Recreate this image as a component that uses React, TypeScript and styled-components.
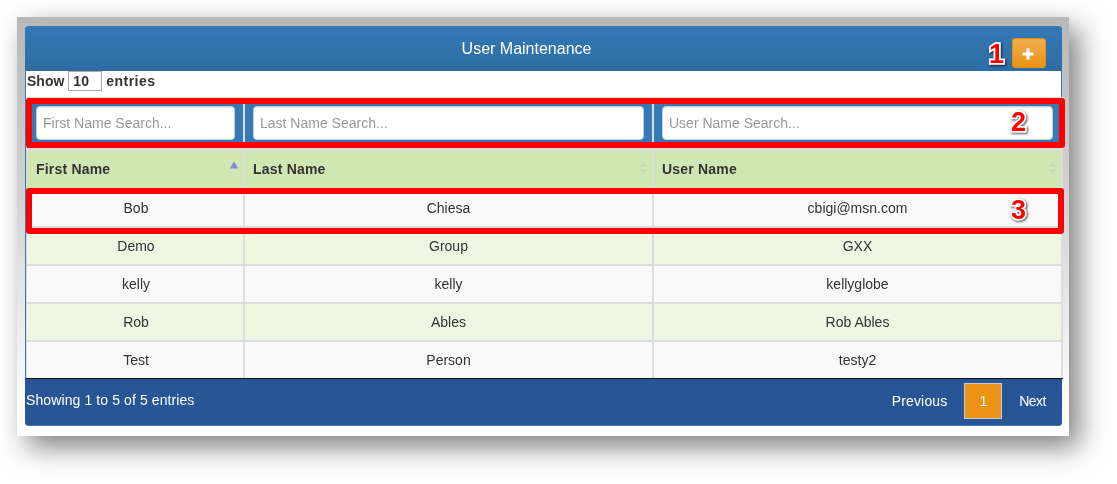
import React from "react";
import styled, { createGlobalStyle } from "styled-components";

const Global = createGlobalStyle`
  html, body { margin: 0; padding: 0; background: #fff; }
  body { font-family: "Liberation Sans", Arial, sans-serif; color: #333; font-size: 14px; }
  * { box-sizing: border-box; }
`;

const Page = styled.div`
  width: 1117px;
  height: 484px;
  padding: 17px 0 0 17px;
  overflow: hidden;
`;

const Frame = styled.div`
  position: relative;
  width: 1052px;
  height: 419px;
  padding: 9px 7px 10px 8px;
  background: linear-gradient(#b8b8b8 0%, #d4d4d4 45%, #fff 95%);
  filter: drop-shadow(10px 11px 14px rgba(0, 0, 0, 0.5));
`;

const Panel = styled.div`
  width: 1037px;
  height: 400px;
  display: flex;
  flex-direction: column;
  border-radius: 4px;
  background: #fff;
  border-left: 1px solid #337ab7;
  border-right: 1px solid #337ab7;
`;

const Header = styled.div`
  height: 45px;
  margin: 0 -1px;
  flex: none;
  display: flex;
  align-items: center;
  justify-content: space-between;
  color: #fff;
  font-size: 16px;
  padding: 0 16px;
  border-radius: 4px 4px 0 0;
  background: linear-gradient(#337ab7, #2d6ca2);
`;

const Title = styled.div`
  flex: 1;
  text-align: center;
  padding-top: 1px;
`;

const AddButton = styled.button`
  width: 34px;
  height: 30px;
  margin-top: 9px;
  padding: 2px 2px 0 0;
  display: flex;
  align-items: center;
  justify-content: center;
  border: 1px solid #e38d13;
  border-radius: 3px;
  background: linear-gradient(#f0ad4e, #eb9316);
`;

const Toolbar = styled.div`
  height: 26px;
  flex: none;
  display: flex;
  align-items: flex-start;
  gap: 4px;
  padding-left: 1px;
  font-size: 14px;
  font-weight: bold;
  line-height: 20px;
  color: #333;
`;

const EntriesLabel = styled.span`
  letter-spacing: 0.45px;
`;

const LengthInput = styled.input`
  width: 34px;
  height: 20px;
  padding: 0 0 0 4px;
  border: 1px solid #aaa;
  font: bold 14px "Liberation Sans", Arial, sans-serif;
  letter-spacing: 0.2px;
  color: #333;
  background: #fff;
`;

const TableWrap = styled.div`
  width: 1037px;
  background: #ddd;
  padding: 1px 2px 0 1px;
  flex: none;
`;

const Row = styled.div<{ $h: number; $gapAfter?: number; $bg: string }>`
  display: grid;
  grid-template-columns: 216px 407px 407px;
  column-gap: 2px;
  height: ${(p) => p.$h}px;
  margin-bottom: ${(p) => p.$gapAfter ?? 2}px;
  & > * { background: ${(p) => p.$bg}; }
`;

const SearchCell = styled.div`
  display: flex;
  align-items: center;
  padding: 0 8px;
  &:first-child { padding-left: 9px; }
`;

const SearchInput = styled.input`
  width: 100%;
  height: 34px;
  padding: 0 6px;
  border: 1px solid #ccc;
  border-radius: 4px;
  background: #fff;
  font: 14px "Liberation Sans", Arial, sans-serif;
  box-shadow: inset 0 1px 1px rgba(0, 0, 0, 0.075);
  &::placeholder { color: #999; opacity: 1; }
`;

const HeadCell = styled.div`
  display: flex;
  align-items: center;
  justify-content: space-between;
  padding: 0 4px 2px 8px;
  font-size: 14px;
  font-weight: bold;
  letter-spacing: 0.2px;
  color: #333;
  &:first-child { padding-left: 9px; }
`;

const SortMark = styled.svg`
  align-self: flex-start;
  margin-top: 10px;
  flex: none;
`;

const BodyCell = styled.div`
  display: flex;
  align-items: center;
  justify-content: center;
  font-size: 14px;
  color: #333;
  &:first-child { padding-left: 2px; }
`;

const TableEnd = styled.div`
  height: 1px;
  background: #111;
  margin: -2px -2px 0 -1px;
`;

const Footer = styled.div`
  flex: 1;
  margin: 0 -1px;
  display: flex;
  justify-content: space-between;
  align-items: flex-start;
  background: #285596;
  color: #fff;
  font-size: 14px;
  border-bottom: 1px solid #337ab7;
  border-radius: 0 0 4px 4px;
`;

const Info = styled.div`
  padding: 13px 0 0 1px;
  line-height: 17px;
  font-size: 14px;
  letter-spacing: 0.1px;
`;

const Pager = styled.div`
  display: flex;
  padding: 4px 0 0 0;
  margin-right: -1px;
`;

const PageLink = styled.div<{ $current?: boolean; $spacing?: number }>`
  height: 36px;
  display: flex;
  align-items: center;
  padding: ${(p) => (p.$current ? "0 14px" : "0 16px")};
  letter-spacing: ${(p) => p.$spacing ?? 0}px;
  border: 1px solid ${(p) => (p.$current ? "#ccc" : "transparent")};
  background: ${(p) => (p.$current ? "#eb9316" : "transparent")};
`;

const RedBox = styled.div<{ $left: number; $top: number; $w: number; $h: number }>`
  position: absolute;
  left: ${(p) => p.$left}px;
  top: ${(p) => p.$top}px;
  width: ${(p) => p.$w}px;
  height: ${(p) => p.$h}px;
  border: 6px solid #f00;
  border-radius: 3px;
  pointer-events: none;
`;

const Callout = styled.div<{ $left: number; $top: number }>`
  position: absolute;
  left: ${(p) => p.$left}px;
  top: ${(p) => p.$top}px;
  font: bold 27px/30px "Liberation Sans", Arial, sans-serif;
  color: #f00;
  -webkit-text-stroke: 3.5px #fff;
  paint-order: stroke fill;
  filter: drop-shadow(1.5px 1.5px 1px rgba(0, 0, 0, 0.7));
`;

const PlusIcon = () => (
  <svg width="12" height="12" viewBox="0 0 12 12" fill="#fff">
    <path d="M4.4 0.5h3.2v3.9h3.9v3.2H7.6v3.9H4.4V7.6H0.5V4.4h3.9z" />
  </svg>
);

const SortAsc = () => (
  <SortMark width="10" height="8" viewBox="0 0 10 8">
    <path d="M5 0.5 9.2 7.5H0.8z" fill="#8585dc" />
  </SortMark>
);

const SortBoth = () => (
  <SortMark width="9" height="14" viewBox="0 0 9 14">
    <path d="M4.5 0.5 8 6H1z" fill="#c6d7b4" />
    <path d="M4.5 13.5 8 8H1z" fill="#c6d7b4" />
  </SortMark>
);

const users = [
  ["Bob", "Chiesa", "cbigi@msn.com"],
  ["Demo", "Group", "GXX"],
  ["kelly", "kelly", "kellyglobe"],
  ["Rob", "Ables", "Rob Ables"],
  ["Test", "Person", "testy2"],
];

export default function App() {
  return (
    <Page>
      <Global />
      <Frame>
        <Panel>
          <Header>
            <Title>User Maintenance</Title>
            <AddButton aria-label="Add user"><PlusIcon /></AddButton>
          </Header>
          <Toolbar>
            Show <LengthInput readOnly value="10" /> <EntriesLabel>entries</EntriesLabel>
          </Toolbar>
          <TableWrap>
            <Row $h={50} $gapAfter={3} $bg="#337ab7">
              <SearchCell><SearchInput placeholder="First Name Search..." /></SearchCell>
              <SearchCell><SearchInput placeholder="Last Name Search..." /></SearchCell>
              <SearchCell><SearchInput placeholder="User Name Search..." /></SearchCell>
            </Row>
            <Row $h={37} $bg="#d1e7b3">
              <HeadCell>First Name <SortAsc /></HeadCell>
              <HeadCell>Last Name <SortBoth /></HeadCell>
              <HeadCell>User Name <SortBoth /></HeadCell>
            </Row>
            {users.map((u, i) => (
              <Row key={u[2]} $h={36} $bg={i % 2 ? "#eff7e3" : "#f9f9f9"}>
                {u.map((t) => <BodyCell key={t}>{t}</BodyCell>)}
              </Row>
            ))}
            <TableEnd />
          </TableWrap>
          <Footer>
            <Info>Showing 1 to 5 of 5 entries</Info>
            <Pager>
              <PageLink $spacing={0.15}>Previous</PageLink>
              <PageLink $current>1</PageLink>
              <PageLink $spacing={-0.5}>Next</PageLink>
            </Pager>
          </Footer>
        </Panel>
        <RedBox $left={9} $top={81} $w={1039} $h={50} />
        <RedBox $left={9} $top={171} $w={1038} $h={46} />
        <Callout $left={972} $top={22}>1</Callout>
        <Callout $left={994} $top={90}>2</Callout>
        <Callout $left={994} $top={178}>3</Callout>
      </Frame>
    </Page>
  );
}
